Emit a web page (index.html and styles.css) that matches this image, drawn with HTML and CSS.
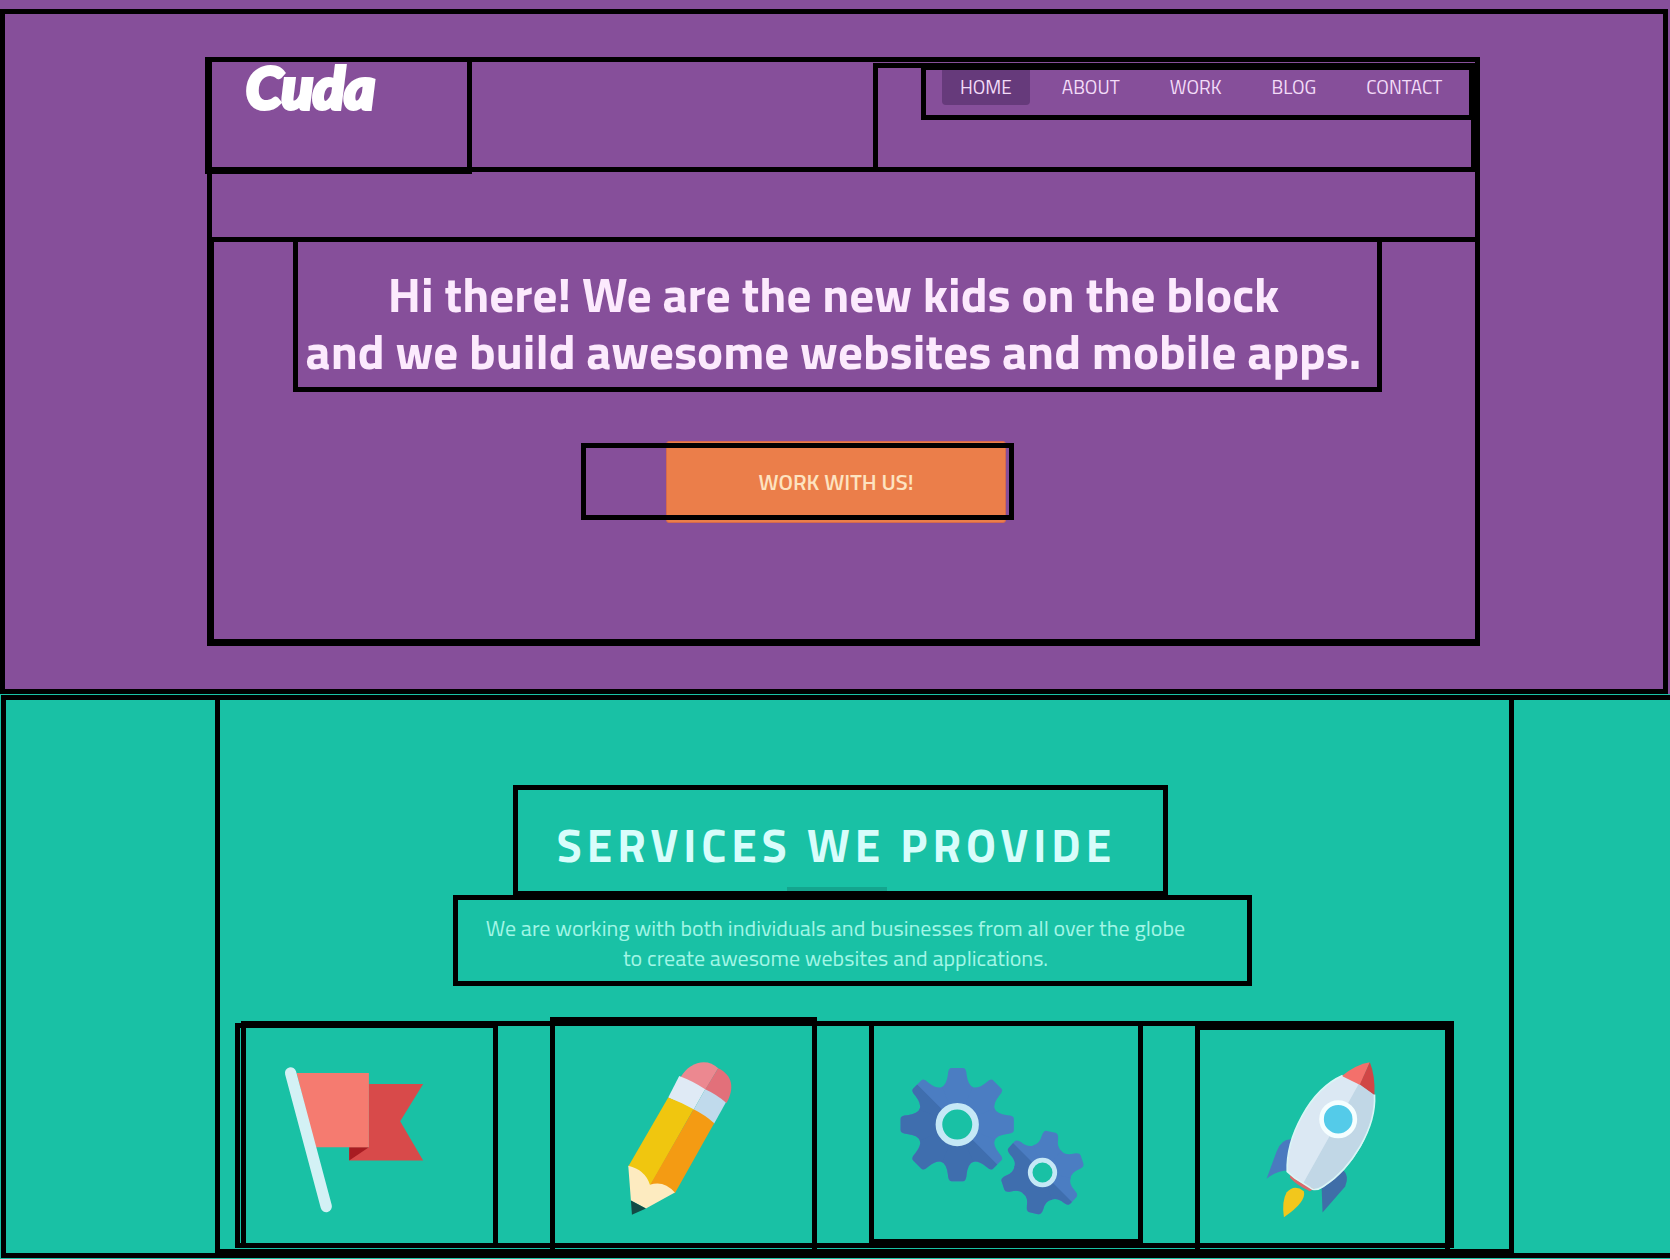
FILE: index.html
```html
<!DOCTYPE html>
<html lang="en">
<head>
<meta charset="utf-8">
<title>Cuda</title>
<meta name="viewport" content="width=device-width, initial-scale=1">
<link rel="stylesheet" href="styles.css">
</head>
<body>
<div class="top">
  <div class="hero box">
    <div class="hero-inner box">
      <header class="header box">
        <a class="logo box" href="#">Cuda</a>
        <nav class="nav box">
          <ul class="menu box">
            <li><a class="menu-link active" href="#">HOME</a></li>
            <li><a class="menu-link" href="#about">ABOUT</a></li>
            <li><a class="menu-link" href="#work">WORK</a></li>
            <li><a class="menu-link" href="#blog">BLOG</a></li>
            <li><a class="menu-link" href="#contact">CONTACT</a></li>
          </ul>
        </nav>
      </header>
      <section class="intro box">
        <h1 class="headline box">Hi there! We are the new kids on the block<br>and we build awesome websites and mobile apps.</h1>
        <div class="cta box"><button class="cta-button" type="button">WORK WITH US!</button></div>
      </section>
    </div>
  </div>
</div>
<main class="bottom">
  <section class="services box">
    <div class="services-inner box">
      <h2 class="title box">SERVICES WE PROVIDE</h2>
      <p class="lead box">We are working with both individuals and businesses from all over the globe<br>to create awesome websites and applications.</p>
      <ul class="cards box">
        <li class="card card-flag box">
          <svg class="art" viewBox="45 69 789 675" role="img" aria-label="Flag">
            <path fill="#d84a4a" d="M447 252H610L541 364L610 482H388V442H447Z"/>
            <path fill="#a81c22" d="M388 442H447L388 482Z"/>
            <path fill="#f57b70" d="M230 219H447V442H285Z"/>
            <path stroke="#d3f1f5" stroke-width="34" stroke-linecap="round" d="M212 219L319 620"/>
          </svg>
        </li>
        <li class="card card-pencil box">
          <svg class="art" viewBox="57 51 801 693" role="img" aria-label="Pencil">
            <path fill="#ec8890" d="M449 232C475 185 530 172 562 205L522 272Z"/>
            <path fill="#e2707a" d="M562 205C605 225 612 265 587 309L522 270Z"/>
            <path fill="#dfeaf5" d="M445 228Q488 244 523 268L488 330L412 293Z"/>
            <path fill="#c0daec" d="M523 268Q558 284 585 308L550 371L488 330Z"/>
            <path fill="#f0c60f" d="M412 293Q452 308 488 328L357 560L292 500Z"/>
            <path fill="#f49b13" d="M488 328Q524 346 550 370L432 580L355 560Z"/>
            <path fill="#fdebc0" d="M292 498Q343 510 357 555Q398 540 432 578L345 626L300 602Z"/>
            <path fill="#134a45" d="M300 602L345 626L303 645Z"/>
          </svg>
        </li>
        <li class="card card-gears box">
          <svg class="art" viewBox="57 63 825 669" role="img" aria-label="Gears">
            <defs>
              <path id="tooth-l" d="M0 4L-48 -112Q-32 -118 -28 -150Q-27 -170 -18 -170H18Q27 -170 28 -150Q32 -118 48 -112Z"/>
              <g id="gear-l">
                <use href="#tooth-l"/><use href="#tooth-l" transform="rotate(45)"/><use href="#tooth-l" transform="rotate(90)"/><use href="#tooth-l" transform="rotate(135)"/>
                <use href="#tooth-l" transform="rotate(180)"/><use href="#tooth-l" transform="rotate(225)"/><use href="#tooth-l" transform="rotate(270)"/><use href="#tooth-l" transform="rotate(315)"/>
              </g>
              <path id="tooth-s" d="M0 4L-44 -74Q-26 -82 -25 -108Q-23 -125 -13 -125H13Q23 -125 25 -108Q26 -82 44 -74Z"/>
              <g id="gear-s" transform="rotate(12)">
                <use href="#tooth-s"/><use href="#tooth-s" transform="rotate(60)"/><use href="#tooth-s" transform="rotate(120)"/>
                <use href="#tooth-s" transform="rotate(180)"/><use href="#tooth-s" transform="rotate(240)"/><use href="#tooth-s" transform="rotate(300)"/>
              </g>
              <clipPath id="shade"><path d="M-200 -200L200 200H-200Z"/></clipPath>
            </defs>
            <g transform="translate(322 374)">
              <use href="#gear-l" fill="#4b7dc2"/>
              <g clip-path="url(#shade)"><use href="#gear-l" fill="#3f6eae"/></g>
              <circle r="55" fill="#19c1a5" stroke="#c5e8f6" stroke-width="20"/>
            </g>
            <g transform="translate(578 518)">
              <use href="#gear-s" fill="#4b7dc2"/>
              <g clip-path="url(#shade)"><use href="#gear-s" fill="#3f6eae"/></g>
              <circle r="37" fill="#19c1a5" stroke="#c5e8f6" stroke-width="14"/>
            </g>
          </svg>
        </li>
        <li class="card card-rocket box">
          <svg class="art" viewBox="45 75 765 669" role="img" aria-label="Rocket">
            <path fill="#4a7abf" d="M336 418Q304 416 290 455L260 537Q288 512 326 512Z"/>
            <path fill="#3f6ea8" d="M488 508Q510 528 496 560L428 638L425 556Z"/>
            <path fill="#d9686a" d="M332 520L408 564L390 574Q355 560 330 534Z"/>
            <path fill="#dbe8f3" d="M490 226C390 270 318 410 322 515L348 538L372 552L540 252Z"/>
            <path fill="#c1d7e6" d="M538 250L584 284C590 400 500 530 420 567Q405 573 370 550Z"/>
            <path fill="#f4706b" d="M486 228Q530 193 570 187L541 255Z"/>
            <path fill="#d04646" d="M570 187Q586 225 584 285L540 254Z"/>
            <path fill="none" stroke="#d9f6f6" stroke-width="5" d="M488 227C390 270 318 410 322 515L345 535L398 568Q412 572 430 560C515 505 590 385 584 284"/>
            <circle cx="475" cy="358" r="50" fill="#54cbe9" stroke="#f5feff" stroke-width="14"/>
            <path fill="#f2c71c" d="M320 578Q343 552 372 574Q380 606 312 652Q305 604 320 578Z"/>
          </svg>
        </li>
      </ul>
    </div>
  </section>
</main>
</body>
</html>
```
FILE: styles.css
```css
* { box-sizing: border-box; }

body {
  margin: 0;
  background: #19c1a5;
  font-family: "Titillium Web", "Roboto", sans-serif;
}

ul { margin: 0; padding: 0; list-style: none; }
h1, h2, p { margin: 0; }

/* wireframe outline shared by every block */
.box {
  outline: 5px solid #000;
  outline-offset: -5px;
}

.top {
  padding: 9px 2px 0 0;
  background: #864f9a;
}

.hero { padding: 48px 188px 48px 207px; }
.hero-inner { padding-bottom: 2px; }

.header {
  display: flex;
  justify-content: space-between;
  height: 115px;
}

.logo {
  width: 267px;
  height: 117px;
  margin-left: -2px;
  padding-left: 41px;
  color: #fff;
  font: italic 900 58px/60px "Lato", sans-serif;
  -webkit-text-stroke: 4px #fff;
  text-decoration: none;
}

.nav {
  width: 603px;
  margin: 6px 4px 0 0;
  padding: 2px 2px 0 48px;
}

.menu {
  display: flex;
  height: 55px;
  padding-left: 21px;
  gap: 14px;
}

.menu-link {
  display: block;
  padding: 4px 18px 0;
  border-radius: 4px;
  color: #f3dcf8;
  font-size: 19px;
  line-height: 36px;
  text-decoration: none;
}

.menu-link.active { background: #663a7b; }

.intro {
  height: 407px;
  margin: 65px 0 0 2px;
}

.headline {
  height: 155px;
  margin: 0 98px 0 84px;
  padding: 28px 8px 0 0;
  color: #fceafd;
  font-size: 49px;
  font-weight: 700;
  line-height: 57px;
  text-align: center;
}

.cta {
  display: flex;
  align-items: center;
  justify-content: flex-end;
  width: 433px;
  height: 77px;
  margin: 51px 0 0 372px;
  padding-right: 8px;
}

.cta-button {
  flex: none;
  width: 340px;
  height: 82px;
  border: 1px solid #d5694f;
  border-radius: 3px;
  background: #eb7e4a;
  color: #fde3c0;
  font: 600 22px/30px "Titillium Web", "Roboto", sans-serif;
}

.bottom { overflow: hidden; }

.services {
  margin: 1px -5px 1px 1px;
  padding: 0 161px 4px 214px;
}

.services-inner { padding: 90px 60px 6px 26px; }

.title {
  height: 111px;
  margin: 0 286px 0 272px;
  padding: 32px 8px 0 0;
  color: #d8fdfb;
  font-size: 46px;
  font-weight: 700;
  line-height: 56px;
  letter-spacing: 5px;
  text-align: center;
}

.title::after {
  content: "";
  display: block;
  width: 100px;
  height: 4px;
  margin: 14px auto 0;
  background: #14a58e;
}

.lead {
  height: 91px;
  margin: -1px 202px 0 212px;
  padding: 18px 34px 0 0;
  color: #a2f6e6;
  font-size: 22px;
  line-height: 30px;
  text-align: center;
}

.cards {
  display: grid;
  grid-template-columns: 257fr 267fr 275fr 255fr;
  column-gap: 52px;
  height: 227px;
  margin-top: 35px;
  padding-right: 4px;
}

.card-flag { margin: 2px 0 0 -6px; }
.card-pencil { margin: -4px 0 -6px; }
.card-gears { margin-bottom: 4px; }
.card-rocket { margin: 4px 0 -6px; }

.art {
  display: block;
  width: 100%;
  fill: none;
}
```
